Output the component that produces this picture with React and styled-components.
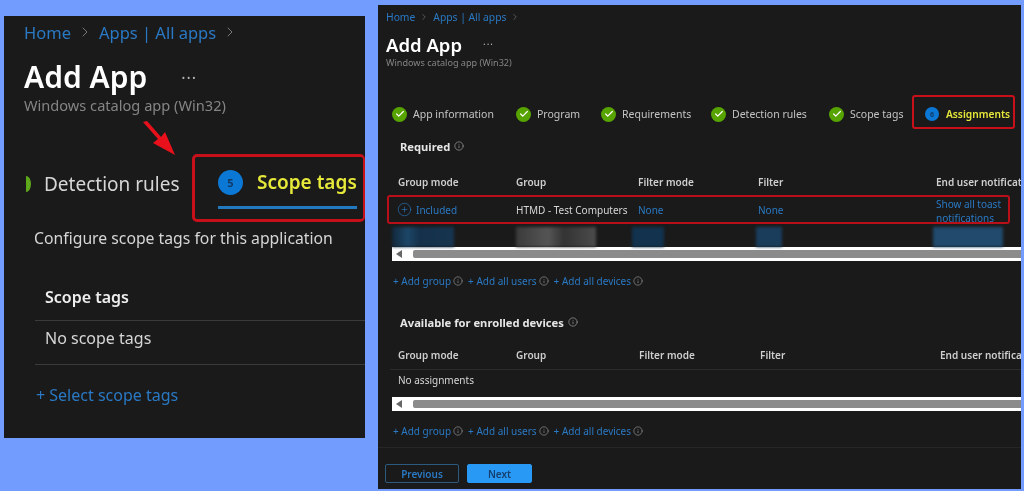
import React from "react";
import styled, { createGlobalStyle } from "styled-components";
import { Check, ChevronRight, CirclePlus, Info } from "lucide-react";

const GlobalStyle = createGlobalStyle`
  html, body { margin: 0; padding: 0; background: #739cff; }
  body { font-family: "Noto Sans", "Open Sans", sans-serif; }
`;

const LINK = "#2a79c4";
const TEXT = "#d6d6d6";
const PANEL = "#1a1a1a";

// columns of the assignment tables, second table sits slightly to the right
const requiredCols = "118px 122px 120px 178px 100px";
const availableCols = "118px 123px 121px 180px 100px";

const Page = styled.div`
  width: 1024px;
  height: 491px;
  overflow: hidden;
  display: flex;
  align-items: flex-start;
  gap: 13px;
  padding-left: 4px;
  box-sizing: border-box;
`;

const Panel = styled.section`
  position: relative;
  flex: none;
  background: ${PANEL};
  overflow: hidden;
  color: ${TEXT};
  filter: blur(0.35px);
`;

const LeftPanel = styled(Panel)`
  width: 361px;
  height: 422px;
  margin-top: 16px;
`;

const RightPanel = styled(Panel)`
  width: 643px;
  height: 484px;
  margin-top: 5px;
`;

const Crumbs = styled.nav`
  display: flex;
  align-items: center;
  color: ${LINK};
  white-space: nowrap;
  font-size: ${(p) => p.$size}px;
  height: ${(p) => p.$height}px;
  padding-left: ${(p) => p.$left}px;
  gap: ${(p) => p.$gap}px;
  svg { color: #8d8d8d; }
`;

const TitleRow = styled.div`
  display: flex;
  align-items: center;
  color: #fff;
  font-weight: 600;
  white-space: nowrap;
  font-size: ${(p) => p.$size}px;
  height: ${(p) => p.$height}px;
  margin-top: ${(p) => p.$top}px;
  padding-left: ${(p) => p.$left}px;
`;

const Dots = styled.span`
  color: #b5b5b5;
  font-weight: 400;
  line-height: 1;
  letter-spacing: 1px;
  font-size: ${(p) => p.$size}px;
  margin-left: ${(p) => p.$gap}px;
  position: relative;
  top: -3px;
`;

const Subtitle = styled.div`
  color: #858585;
  white-space: nowrap;
  font-size: ${(p) => p.$size}px;
  line-height: ${(p) => p.$height}px;
  padding-left: ${(p) => p.$left}px;
`;

/* left panel */

const BigTabs = styled.div`
  display: flex;
  align-items: stretch;
  height: 68px;
  margin-top: 40px;
  padding-left: 22px;
`;

const SliverStep = styled.div`
  display: flex;
  align-items: center;
  width: 166px;
  font-size: 19px;
  white-space: nowrap;
  padding-bottom: 8px;
  box-sizing: border-box;
`;

const Sliver = styled.i`
  width: 5px;
  height: 16px;
  margin-right: 13px;
  background: #5ea81c;
  border-radius: 0 5px 5px 0 / 0 8px 8px 0;
`;

const BigActiveTab = styled.div`
  width: 173px;
  border: 3px solid #c8101a;
  border-right-width: 2px;
  border-radius: 5px;
  box-sizing: border-box;
  padding: 7px 6px 0 23px;
`;

const BigTabInner = styled.div`
  display: flex;
  align-items: center;
  gap: 14px;
  height: 36px;
  border-bottom: 3px solid #2379bd;
  padding-bottom: 6px;
`;

const StepBadge = styled.span`
  flex: none;
  display: inline-flex;
  align-items: center;
  justify-content: center;
  border-radius: 50%;
  background: #0b78d6;
  color: #123a66;
  font-weight: 700;
  width: ${(p) => p.$size}px;
  height: ${(p) => p.$size}px;
  font-size: ${(p) => p.$font}px;
`;

const YellowLabel = styled.span`
  color: #e6e83a;
  font-weight: 600;
  white-space: nowrap;
  font-size: ${(p) => p.$size}px;
`;

const Intro = styled.p`
  margin: 4px 0 0;
  padding-left: 30px;
  font-size: 15.75px;
  line-height: 24px;
  white-space: nowrap;
`;

const ScopeTable = styled.div`
  margin: 24px 0 0 31px;
`;

const ScopeRow = styled.div`
  display: flex;
  align-items: center;
  padding-left: 10px;
  padding-bottom: ${(p) => p.$lift}px;
  border-bottom: 1px solid #3b3b3b;
  height: ${(p) => p.$height}px;
  box-sizing: border-box;
  font-size: 16px;
  font-weight: ${(p) => (p.$head ? 600 : 400)};
  color: ${(p) => (p.$head ? "#eee" : TEXT)};
`;

const SelectLink = styled.div`
  margin: 18px 0 0 32px;
  color: ${LINK};
  font-size: 16px;
  line-height: 24px;
`;

/* red arrow pointing at the active tab */
const ArrowMark = styled.svg`
  position: absolute;
  left: 138px;
  top: 104px;
`;

/* right panel */

const Steps = styled.div`
  display: flex;
  align-items: center;
  height: 34px;
  margin-top: 28px;
  padding-left: 14px;
`;

const Step = styled.div`
  display: flex;
  align-items: center;
  gap: 6px;
  font-size: 10.5px;
  color: #c4c4c4;
  white-space: nowrap;
  width: ${(p) => p.$width}px;
`;

const CheckDot = styled.span`
  flex: none;
  width: 15px;
  height: 15px;
  border-radius: 50%;
  background: #57a300;
  color: #fff;
  display: inline-flex;
  align-items: center;
  justify-content: center;
`;

const ActiveStep = styled.div`
  display: flex;
  align-items: center;
  gap: 7px;
  width: 103px;
  height: 34px;
  margin: -4px 0 0 7px;
  padding: 4px 0 0 11px;
  box-sizing: border-box;
  border: 2px solid #c8101a;
  border-radius: 3px;
`;

const SectionTitle = styled.h3`
  display: flex;
  align-items: center;
  gap: 4px;
  margin: 0;
  padding-left: 22px;
  color: #e6e6e6;
  font-size: 11.2px;
  font-weight: 700;
  white-space: nowrap;
  height: 20px;
  margin-top: ${(p) => p.$top}px;
  svg { color: #8a8a8a; }
`;

const GridRow = styled.div`
  position: relative;
  display: grid;
  align-items: center;
  width: max-content;
  padding-left: 20px;
  font-size: 10px;
  white-space: nowrap;
  grid-template-columns: ${(p) => p.$cols};
  height: ${(p) => p.$height}px;
  margin-top: ${(p) => p.$top || 0}px;
`;

const HeadRow = styled(GridRow)`
  font-weight: 600;
  color: #cfcfcf;
`;

const RowRule = styled.div`
  height: 1px;
  background: #2c2c2c;
  margin-left: 12px;
`;

const Link = styled.span`
  color: ${LINK};
  line-height: 14px;
  white-space: normal;
`;

const ToastLink = styled(Link)`
  padding-top: 3px;
`;

const IncludedCell = styled(Link)`
  display: flex;
  align-items: center;
  gap: 4px;
  margin-left: -1px;
`;

const RowHighlight = styled.div`
  position: absolute;
  left: 9px;
  top: 1px;
  width: 623px;
  height: 29px;
  border: 2px solid #b80f18;
  border-radius: 3px;
  box-sizing: border-box;
  pointer-events: none;
`;

const BlurredRow = styled.div`
  height: 20px;
  margin-top: 3px;
  display: flex;
  filter: blur(1.5px);
  overflow: hidden;
`;

const Smudge = styled.i`
  flex: none;
  height: 20px;
  width: ${(p) => p.$w}px;
  margin-left: ${(p) => p.$gap}px;
  background: ${(p) => p.$c};
`;

const ScrollBar = styled.div`
  display: flex;
  align-items: center;
  margin-left: 14px;
  height: 14px;
  background: #fff;
  padding-left: 4px;
  margin-top: ${(p) => p.$top}px;
`;

const ScrollArrow = styled.i`
  width: 0;
  height: 0;
  border-style: solid;
  border-width: 4px 6px 4px 0;
  border-color: transparent #666 transparent transparent;
`;

const ScrollThumb = styled.div`
  flex: 1;
  height: 8px;
  margin-left: 11px;
  background: #8b8b8b;
  border-radius: 2px 0 0 2px;
`;

const AddLinks = styled.div`
  display: flex;
  align-items: center;
  gap: 2px;
  padding-left: 15px;
  height: 20px;
  color: ${LINK};
  font-size: 10px;
  white-space: nowrap;
  margin-top: ${(p) => p.$top}px;
  svg { color: #7d7d7d; margin-right: 3px; }
`;

const Footer = styled.footer`
  display: flex;
  gap: 8px;
  margin-top: 6px;
  padding: 16px 0 0 7px;
  border-top: 1px solid #262626;
`;

const FooterButton = styled.button`
  height: 19px;
  padding: 0;
  box-sizing: border-box;
  border-radius: 2px;
  font: inherit;
  font-size: 10px;
  font-weight: 600;
  width: ${(p) => (p.$primary ? 65 : 74)}px;
  background: ${(p) => (p.$primary ? "#2899f5" : "transparent")};
  color: ${(p) => (p.$primary ? "#15406e" : LINK)};
  border: 1px solid ${(p) => (p.$primary ? "#2899f5" : "#2b5a7e")};
`;

const AddActions = ({ top }) => (
  <AddLinks $top={top}>
    <span>+ Add group</span>
    <Info size={10} />
    <span>+ Add all users</span>
    <Info size={10} />
    <span>+ Add all devices</span>
    <Info size={10} />
  </AddLinks>
);

const doneSteps = [
  { label: "App information", width: 124 },
  { label: "Program", width: 85 },
  { label: "Requirements", width: 110 },
  { label: "Detection rules", width: 118 },
  { label: "Scope tags", width: 76 },
];

const ScopeTagsPanel = () => (
  <LeftPanel>
    <Crumbs $size={16.5} $height={32} $left={20} $gap={6}>
      <span>Home</span>
      <ChevronRight size={16} strokeWidth={1.25} />
      <span>Apps | All apps</span>
      <ChevronRight size={16} strokeWidth={1.25} />
    </Crumbs>
    <TitleRow $size={30} $height={40} $top={8} $left={20}>
      Add App
      <Dots $size={16} $gap={34}>...</Dots>
    </TitleRow>
    <Subtitle $size={14.6} $height={18} $left={20}>
      Windows catalog app (Win32)
    </Subtitle>
    <ArrowMark width="42" height="40" viewBox="0 0 42 40">
      <path d="M1 2 L5 1 L19 17 L23 12 L33 35 L11 23 L16 19 Z" fill="#e8101a" />
    </ArrowMark>
    <BigTabs>
      <SliverStep>
        <Sliver />
        Detection rules
      </SliverStep>
      <BigActiveTab>
        <BigTabInner>
          <StepBadge $size={25} $font={11}>5</StepBadge>
          <YellowLabel $size={19}>Scope tags</YellowLabel>
        </BigTabInner>
      </BigActiveTab>
    </BigTabs>
    <Intro>Configure scope tags for this application</Intro>
    <ScopeTable>
      <ScopeRow $head $height={47} $lift={0}>Scope tags</ScopeRow>
      <ScopeRow $height={44} $lift={10}>No scope tags</ScopeRow>
    </ScopeTable>
    <SelectLink>+ Select scope tags</SelectLink>
  </LeftPanel>
);

const AssignmentsPanel = () => (
  <RightPanel>
    <Crumbs $size={10.3} $height={24} $left={8} $gap={4}>
      <span>Home</span>
      <ChevronRight size={10} strokeWidth={1.25} />
      <span>Apps | All apps</span>
      <ChevronRight size={10} strokeWidth={1.25} />
    </Crumbs>
    <TitleRow $size={18.5} $height={26} $top={2} $left={8}>
      Add App
      <Dots $size={10} $gap={21}>...</Dots>
    </TitleRow>
    <Subtitle $size={9.1} $height={12} $left={8}>
      Windows catalog app (Win32)
    </Subtitle>
    <Steps>
      {doneSteps.map((s) => (
        <Step key={s.label} $width={s.width}>
          <CheckDot>
            <Check size={10} strokeWidth={3} />
          </CheckDot>
          {s.label}
        </Step>
      ))}
      <ActiveStep>
        <StepBadge $size={14} $font={7}>6</StepBadge>
        <YellowLabel $size={10.2}>Assignments</YellowLabel>
      </ActiveStep>
    </Steps>
    <SectionTitle $top={5}>
      Required <Info size={10} />
    </SectionTitle>

    <HeadRow $cols={requiredCols} $height={24} $top={14}>
      <span>Group mode</span>
      <span>Group</span>
      <span>Filter mode</span>
      <span>Filter</span>
      <span>End user notifications</span>
    </HeadRow>
    <GridRow $cols={requiredCols} $height={30}>
      <IncludedCell>
        <CirclePlus size={15} strokeWidth={1} />
        Included
      </IncludedCell>
      <span>HTMD - Test Computers</span>
      <Link>None</Link>
      <Link>None</Link>
      <ToastLink>Show all toast notifications</ToastLink>
      <RowHighlight />
    </GridRow>
    <BlurredRow>
      <Smudge $gap={14} $w={62} $c="linear-gradient(90deg, #12283c, #1d4668 25%, #14304a 45%, #17344f)" />
      <Smudge $gap={62} $w={80} $c="linear-gradient(90deg, #3a3a3a, #555 40%, #333 60%, #4c4c4c)" />
      <Smudge $gap={36} $w={32} $c="#12324e" />
      <Smudge $gap={92} $w={26} $c="#1a3d5c" />
      <Smudge $gap={151} $w={70} $c="#214a6c" />
    </BlurredRow>
    <ScrollBar $top={0}>
      <ScrollArrow />
      <ScrollThumb />
    </ScrollBar>
    <AddActions top={10} />

    <SectionTitle $top={21}>
      Available for enrolled devices <Info size={10} />
    </SectionTitle>
    <HeadRow $cols={availableCols} $height={28} $top={9}>
      <span>Group mode</span>
      <span>Group</span>
      <span>Filter mode</span>
      <span>Filter</span>
      <span>End user notifications</span>
    </HeadRow>
    <RowRule />
    <GridRow $cols={availableCols} $height={20}>
      <span>No assignments</span>
    </GridRow>
    <ScrollBar $top={7}>
      <ScrollArrow />
      <ScrollThumb />
    </ScrollBar>
    <AddActions top={10} />
    <Footer>
      <FooterButton>Previous</FooterButton>
      <FooterButton $primary>Next</FooterButton>
    </Footer>
  </RightPanel>
);

export default function App() {
  return (
    <>
      <GlobalStyle />
      <Page>
        <ScopeTagsPanel />
        <AssignmentsPanel />
      </Page>
    </>
  );
}
